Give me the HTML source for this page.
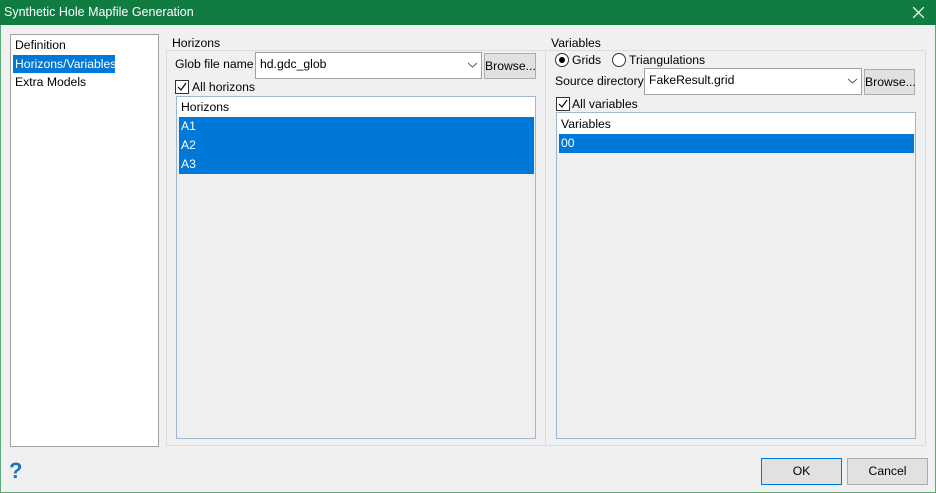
<!DOCTYPE html>
<html><head><style>
*{box-sizing:border-box;margin:0;padding:0}
body{width:936px;height:493px;background:#f0f0f0;font-family:"Liberation Sans",sans-serif;font-size:12.2px;color:#000;position:relative;overflow:hidden}
.a{position:absolute;white-space:nowrap}
.tb{left:0;top:0;width:936px;height:25px;background:#107c41;color:#fff;font-size:12.5px;line-height:25px;padding-left:4px}
.frame{left:0;top:25px;width:936px;height:468px;border:1px solid #5aa77a;border-top:none}
.white{background:#fff}
.btn{background:#e1e1e1;border:1px solid #adadad;text-align:center}
.combo{background:#fff;border:1px solid #a0a0a0;padding:4px 0 0 4px}
.chk{width:14px;height:14px;border:1px solid #333;background:#fff}
.sel{background:#0078d7;color:#fff;padding-left:2px}
</style></head><body>
<div class="a tb">Synthetic Hole Mapfile Generation</div>
<svg class="a" style="left:913px;top:7px" width="11" height="11"><path d="M0 0L11 11M11 0L0 11" stroke="#fff" stroke-width="1.2"/></svg>
<div class="a frame"></div>

<div class="a white" style="left:10px;top:34px;width:149px;height:413px;border:1px solid #a0a0a0"></div>
<div class="a" style="left:15px;top:38px">Definition</div>
<div class="a sel" style="left:13px;top:55px;width:102px;height:18px;line-height:18px">Horizons/Variables</div>
<div class="a" style="left:15px;top:75px">Extra Models</div>

<div class="a" style="left:166px;top:50px;width:380px;height:396px;border:1px solid #dcdcdc"></div>
<div class="a" style="left:169px;top:36px;background:#f0f0f0;padding:0 3px">Horizons</div>
<div class="a" style="left:175px;top:57px">Glob file name</div>
<div class="a combo" style="left:255px;top:52px;width:227px;height:27px">hd.gdc_glob</div>
<svg class="a" style="left:468px;top:62px" width="9" height="6"><path d="M0 1L4.5 5L9 1" stroke="#555" fill="none"/></svg>
<div class="a btn" style="left:484px;top:53px;width:52px;height:26px;line-height:24px">Browse...</div>
<div class="a chk" style="left:175px;top:80px"></div>
<svg class="a" style="left:175px;top:80px" width="14" height="14"><path d="M3 7L6 10L11 3" stroke="#000" fill="none" stroke-width="1.2"/></svg>
<div class="a" style="left:192px;top:80px">All horizons</div>
<div class="a" style="left:176px;top:96px;width:360px;height:343px;border:1px solid #9fb7d3"></div>
<div class="a white" style="left:177px;top:97px;width:358px;height:20px;padding:3px 0 0 4px">Horizons</div>
<div class="a sel" style="left:179px;top:117px;width:355px;height:19px;line-height:19px">A1</div>
<div class="a sel" style="left:179px;top:136px;width:355px;height:19px;line-height:19px">A2</div>
<div class="a sel" style="left:179px;top:155px;width:355px;height:19px;line-height:19px">A3</div>

<div class="a" style="left:545px;top:50px;width:381px;height:396px;border:1px solid #dcdcdc"></div>
<div class="a" style="left:548px;top:36px;background:#f0f0f0;padding:0 3px">Variables</div>
<div class="a" style="left:555px;top:53px;width:14px;height:14px;border:1px solid #333;border-radius:50%;background:#fff"></div>
<div class="a" style="left:559px;top:57px;width:6px;height:6px;border-radius:50%;background:#000"></div>
<div class="a" style="left:572px;top:53px">Grids</div>
<div class="a" style="left:612px;top:53px;width:14px;height:14px;border:1px solid #333;border-radius:50%;background:#fff"></div>
<div class="a" style="left:629px;top:53px">Triangulations</div>
<div class="a" style="left:555px;top:74px">Source directory</div>
<div class="a combo" style="left:644px;top:68px;width:218px;height:27px">FakeResult.grid</div>
<svg class="a" style="left:848px;top:78px" width="9" height="6"><path d="M0 1L4.5 5L9 1" stroke="#555" fill="none"/></svg>
<div class="a btn" style="left:864px;top:69px;width:51px;height:26px;line-height:24px">Browse...</div>
<div class="a chk" style="left:556px;top:97px"></div>
<svg class="a" style="left:556px;top:97px" width="14" height="14"><path d="M3 7L6 10L11 3" stroke="#000" fill="none" stroke-width="1.2"/></svg>
<div class="a" style="left:572px;top:97px">All variables</div>
<div class="a" style="left:556px;top:112px;width:360px;height:327px;border:1px solid #9fb7d3"></div>
<div class="a white" style="left:557px;top:113px;width:358px;height:21px;padding:4px 0 0 4px">Variables</div>
<div class="a sel" style="left:559px;top:134px;width:355px;height:19px;line-height:19px">00</div>

<div class="a" style="left:9px;top:458px;color:#1a75bb;font-size:22px;font-weight:bold">?</div>
<div class="a btn" style="left:761px;top:458px;width:81px;height:27px;line-height:25px;border:1px solid #0078d7">OK</div>
<div class="a btn" style="left:847px;top:458px;width:81px;height:27px;line-height:25px">Cancel</div>
</body></html>
